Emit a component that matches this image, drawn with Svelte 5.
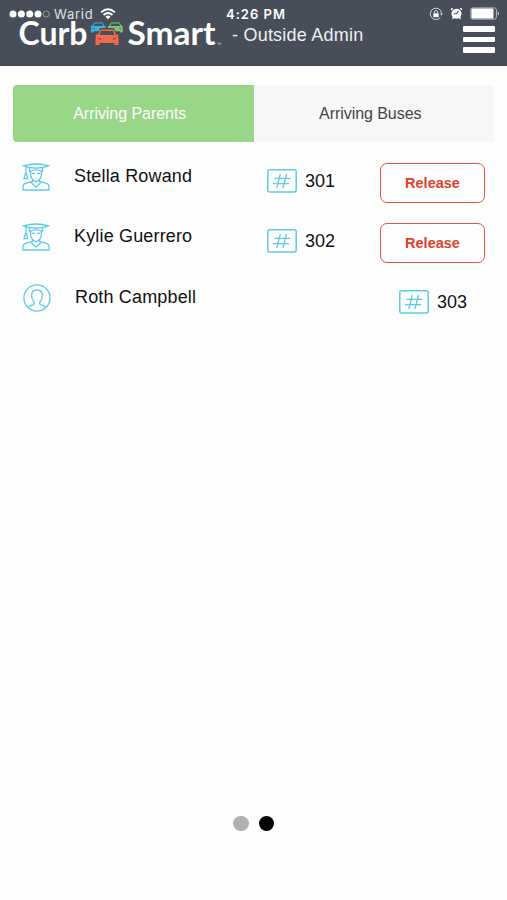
<script lang="ts">
  type Kind = "student" | "person";

  interface Arrival {
    name: string;
    tag: number;
    kind: Kind;
    releasable: boolean;
  }

  const tabs = ["Arriving Parents", "Arriving Buses"];

  const arrivals: Arrival[] = [
    { name: "Stella Rowand", tag: 301, kind: "student", releasable: true },
    { name: "Kylie Guerrero", tag: 302, kind: "student", releasable: true },
    { name: "Roth Campbell", tag: 303, kind: "person", releasable: false },
  ];

  let activeTab = $state(0);
  let page = $state(1);
</script>

{#snippet car()}
  <path
    fill-rule="evenodd"
    d="M4.500 1.500Q5 0 6.500 0h11q1.500 0 2 1.500L21 5h2.500v1.500l-.8.300q.8.700.8 2v6.700h-4v-2h-15v2h-4V8.800q0-1.300.8-2L.5 6.500V5H3zM6 1.500L4.600 5.500h14.800L18 1.500zM3 8.500v1l3.500.5v-.8zM21 8.500v1l-3.500.5v-.8z"
  />
{/snippet}

<div class="screen">
  <!-- Drawn by the system on top of the app header -->
  <div class="status">
    <div class="status-left">
      <svg class="signal" width="41" height="8" viewBox="0 0 41 8">
        {#each [4, 12.400, 20.700, 29] as cx}
          <circle {cx} cy="4" r="3.500" fill="#fff" />
        {/each}
        <circle cx="37.300" cy="4" r="3" fill="none" stroke="#a9adb3" stroke-width=".8" />
      </svg>
      <span class="carrier">Warid</span>
      <svg class="wifi" width="16" height="12" viewBox="0 0 16 12" fill="none" stroke="#fff" stroke-width="1.800">
        <path d="M1 4.300Q8-1.900 15 4.300M3.500 7Q8 3 12.500 7" />
        <path d="M5.400 8.700Q8 6.500 10.600 8.700L8 11.300z" fill="#fff" stroke="none" />
      </svg>
    </div>
    <span class="time">4:26 PM</span>
    <div class="status-right">
      <svg width="14" height="14" viewBox="0 0 14 14" fill="none" stroke="#d5d8db">
        <path d="M12.600 6A5.700 5.700 0 1 0 11.300 10.600" />
        <path d="M11 6.500h3l-1.400 2z" fill="#e8e9eb" stroke="none" />
        <rect x="4.300" y="6.300" width="5.400" height="3.900" fill="#fff" stroke="none" />
        <path d="M5.400 6.500V5q0-1.400 1.600-1.400T8.600 5v1.500" />
      </svg>
      <svg width="13" height="13" viewBox="0 0 13 13" fill="none" stroke="#fff">
        <circle cx="6.500" cy="6.800" r="5" fill="#fff" stroke="none" />
        <path d="M1 2.800L2.600 1.300M12 2.800L10.400 1.300M3.500 10.500l-1 1.400M9.500 10.500l1 1.400" stroke-width="1.500" />
        <path d="M3.800 6.800h2.800L8.500 3.800" stroke="#474e59" stroke-width="1.100" />
      </svg>
      <svg width="30" height="13" viewBox="0 0 30 13">
        <rect x=".9" y=".9" width="25.500" height="11.200" rx="2" fill="none" stroke="#c3c6ca" stroke-width=".9" />
        <rect x="1.500" y="1.500" width="22" height="10" rx="1" fill="#fff" />
        <path d="M27.800 4.500q2 2 0 4z" fill="#fff" />
      </svg>
    </div>
  </div>

  <header>
    <svg class="logo" width="206" height="36" viewBox="0 0 206 36" fill="#fff" role="img" aria-label="Curb Smart">
      <text class="wordmark" x="-.5" y="30" textLength="69" lengthAdjust="spacingAndGlyphs">Curb</text>
      <g fill="#36b4de" transform="translate(71.500 7.500) scale(.65)">{@render car()}</g>
      <g fill="#7cc576" transform="translate(88.500 7.500) scale(.65)">{@render car()}</g>
      <path d="M78 21l3-8h14l3 8z" fill="#474e59" />
      <g fill="#f26a4b" transform="translate(76 14.500)">{@render car()}</g>
      <text class="wordmark" x="108.500" y="30" textLength="88" lengthAdjust="spacingAndGlyphs">Smart</text>
      <text class="mark" x="197.500" y="31">™</text>
    </svg>
    <span class="role">- Outside Admin</span>
    <button class="menu" aria-label="Menu">
      <span></span>
      <span></span>
      <span></span>
    </button>
  </header>

  <nav class="tabs">
    {#each tabs as tab, i}
      <button class:active={i === activeTab} onclick={() => (activeTab = i)}>{tab}</button>
    {/each}
  </nav>

  <ul class="arrivals">
    {#each arrivals as arrival}
      <li class={arrival.kind}>
        <svg class="avatar" width="28" height="28" viewBox="0 0 28 28">
          {#if arrival.kind === "student"}
            <path d="M1.500 2.800Q14-.8 26.500 2.800Q20.500 5.200 14 5.200T1.500 2.800z" />
            <path d="M7.500 4.700v3.700q6.500-3 13 0V4.700M4 3.800v7M3.500 10.500L2 15.600h3.600L4.500 10.500z" />
            <path d="M8.700 8.300v4q.8 4.700 5.300 6.500 4.500-1.800 5.300-6.500v-4M10 10.300h3m2 0h3" />
            <path d="M10.500 16.500v2L3.500 20.300Q1 21 1 24v3h26v-3q0-3-2.500-3.700l-7-1.800v-2M8.700 19.200L14 24l5.300-4.800" />
          {:else}
            <circle cx="14" cy="14" r="13.100" />
            <path
              d="M5.500 23.300Q6 21.800 10 20.800q1.800-.6 1.300-2.300-2.700-3-2.700-7Q8.600 6 14 6t5.400 5.500q0 4-2.700 7-.5 1.700 1.300 2.300 4 1 4.500 2.500"
            />
          {/if}
        </svg>
        <span class="name">{arrival.name}</span>
        <span class="tag">
          <svg width="30" height="24" viewBox="0 0 30 24">
            <rect x=".8" y=".8" width="28.400" height="22.200" rx="2" stroke-width="1.500" />
            <path d="M13.400 5l-3.700 14M19.600 5l-3.700 14M7.500 9.300h16M6 14.700h16" stroke-width="1.300" />
          </svg>
          {arrival.tag}
        </span>
        {#if arrival.releasable}
          <button class="release">Release</button>
        {/if}
      </li>
    {/each}
  </ul>

  <div class="pager">
    {#each [0, 1] as n}
      <button class:current={n === page} aria-label="Page {n + 1}" onclick={() => (page = n)}></button>
    {/each}
  </div>
</div>

<style>
  :global(body) {
    background: #fefefe;
  }

  button {
    padding: 0;
    border: none;
    background: none;
    font-family: inherit;
    cursor: pointer;
  }

  svg {
    display: block;
    flex-shrink: 0;
  }

  .screen {
    position: relative;
    box-sizing: border-box;
    display: flex;
    flex-direction: column;
    height: 900px;
    font-family: "Liberation Sans", Arial, sans-serif;
    color: #111;
  }

  .status {
    position: absolute;
    inset: 0 0 auto;
    display: grid;
    grid-template-columns: 1fr auto 1fr;
    align-items: center;
    height: 27px;
    padding: 0 7px 0 9px;
    color: #fff;
    font-family: Inter, "Liberation Sans", sans-serif;
    font-size: 13px;
  }

  .status-left,
  .status-right {
    display: flex;
    align-items: center;
  }

  .carrier {
    margin: 0 7px 0 4px;
    color: #dfe1e4;
    letter-spacing: 0.75px;
  }

  .time {
    padding-left: 3px;
    font-weight: 600;
    letter-spacing: 1px;
  }

  .status-right {
    justify-content: flex-end;
    gap: 7px;
  }

  header {
    display: flex;
    align-items: flex-start;
    box-sizing: border-box;
    height: 66px;
    padding: 15px 12px 0 19px;
    background: #474e59;
    border-bottom: 1px solid #3f4650;
  }

  .wordmark {
    font: 700 32px Lato, sans-serif;
  }

  .mark {
    font-size: 5px;
    opacity: 0.7;
  }

  .role {
    flex: 1;
    margin: 9px 0 0 7px;
    color: #eef0f2;
    font-size: 18px;
    line-height: 22px;
    letter-spacing: 0.22px;
  }

  .menu {
    display: flex;
    flex-direction: column;
    gap: 5px;
    margin-top: 11px;
  }

  .menu span {
    width: 32px;
    height: 5.500px;
    border-radius: 1px;
    background: #fff;
  }

  .tabs {
    display: grid;
    grid-template-columns: 1fr 1fr;
    height: 57px;
    margin: 19px 13px 0;
    border-radius: 4px;
    overflow: hidden;
    background: #f7f7f7;
  }

  .tabs button {
    padding: 1px 7px 0 0;
    color: #444;
    font-size: 16px;
    letter-spacing: -0.05px;
  }

  .tabs .active {
    background: #99d688;
    color: #fff;
  }

  .arrivals {
    flex: 1;
    margin: 0;
    padding: 21px 22px 0;
    list-style: none;
  }

  li {
    display: flex;
    align-items: flex-start;
    height: 60px;
  }

  .person {
    padding: 1px 0 0 1px;
  }

  .avatar,
  .tag svg {
    fill: none;
    stroke: #5dcbe8;
    stroke-width: 1.300;
  }

  .name {
    width: 193px;
    margin-left: 24px;
    padding-top: 1px;
    font-size: 18px;
    line-height: 25px;
    letter-spacing: 0.16px;
  }

  .tag {
    display: flex;
    align-items: center;
    gap: 8px;
    margin-top: 6px;
    font-size: 18px;
    line-height: 24px;
  }

  .person .tag {
    margin: 6px 18px 0 auto;
  }

  .release {
    box-sizing: border-box;
    width: 105px;
    height: 40px;
    margin-left: auto;
    border: 1.500px solid #e5513a;
    border-radius: 7px;
    color: #e0412a;
    font-size: 14.500px;
    font-weight: 700;
  }

  .pager {
    display: flex;
    justify-content: center;
    gap: 10px;
    padding-bottom: 69px;
  }

  .pager button {
    width: 15.500px;
    height: 15.500px;
    border-radius: 50%;
    background: #b1b1b1;
  }

  .pager .current {
    background: #000;
  }
</style>
